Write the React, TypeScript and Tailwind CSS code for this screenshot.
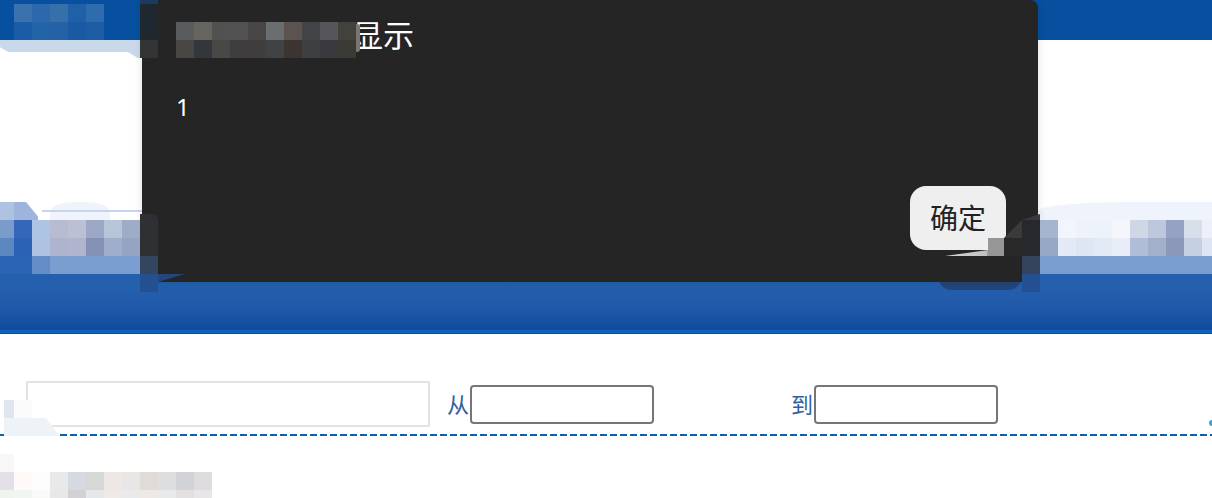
const font = "font-['Noto_Sans','Noto_Sans_CJK_SC',sans-serif]";

// pixelated patches that sit over the page, 18px cells
function Mosaic({ rows, className }: { rows: string[][]; className: string }) {
  return (
    <div className={"absolute flex flex-col " + className}>
      {rows.map((row, i) => (
        <div key={i} className="flex h-[18px]">
          {row.map((c, j) => (
            <div key={j} className="h-full w-[18px] shrink-0" style={{ backgroundColor: c }} />
          ))}
        </div>
      ))}
    </div>
  );
}

function Field({ label, className }: { label: string; className: string }) {
  return (
    <label className={"flex items-center text-[22px] leading-none text-[#2f5f9e] " + className}>
      {label}
      <input className="ml-px h-[39px] w-[184px] rounded border-2 border-[#767676] bg-white" />
    </label>
  );
}

export default function App() {
  return (
    <div className={"relative h-[498px] w-[1212px] overflow-hidden bg-white " + font}>
      {/* header */}
      <div className="h-[40px] bg-[#07509f]" />
      <div className="h-[18px] w-[142px] bg-[#c9d9ea] [clip-path:polygon(0_0,100%_0,100%_100%,97%_100%,90%_67%,6%_67%,0_40%)]" />
      <div className="h-[144px]" />
      <div className="relative h-[80px] overflow-hidden">
        <div className="absolute left-[50px] top-0 h-[40px] w-[60px] rounded-t-[24px_10px] bg-[#eff3fb]" />
        <div className="absolute left-[42px] top-[8px] h-[2px] w-[100px] bg-[#c5d4f0]" />
        <div className="absolute left-[1036px] top-0 h-[40px] w-[300px] rounded-tl-[90px_10px] bg-[#eff3fb]" />
        <div className="absolute left-0 top-0 h-[18px] w-[14px] bg-[#aec3e2]" />
        <div className="absolute left-[14px] top-0 h-[18px] w-[24px] bg-[#9db5dd] [clip-path:polygon(0_0,50%_0,100%_80%,100%_100%,0_100%)]" />
      </div>
      <div className="h-[48px] bg-[linear-gradient(180deg,#2460ae_0%,#2159a9_55%,#0f4a9c_100%)]" />
      <div className="h-[3px] bg-[#0b63bb]" />
      <div className="h-px bg-[#0a4fa0]" />

      {/* filter row */}
      <div className="flex h-[100px] items-center pl-[26px] pt-[40px]">
        <input className="h-[46px] w-[404px] border-2 border-[#e3e3e3] bg-white" />
        <Field label="从" className="ml-[17px]" />
        <Field label="到" className="ml-[137px]" />
      </div>
      <div className="h-[2px] bg-[repeating-linear-gradient(90deg,#0f5fb0_0,#0f5fb0_7px,transparent_7px,transparent_10px)]" />

      {/* dialog */}
      <div className="absolute left-[938px] top-[274px] h-[16px] w-[84px] rounded-b-[14px] bg-[#24467a]" />
      <div className="absolute left-[142px] top-0 flex h-[282px] w-[896px] flex-col rounded-tr-[8px] bg-[#252525] shadow-[0_0_8px_rgba(0,0,0,0.12)]">
        <div className="pl-[210px] pt-[15px] text-[31px] leading-[40px] text-white">显示</div>
        <div className="pl-[34px] pt-[37px] text-[24px] leading-[30px] text-white">1</div>
        <div className="flex flex-1 items-start justify-end pr-[32px] pt-[64px]">
          <button className="h-[64px] w-[96px] rounded-[16px] bg-[#efefef] text-[28px] text-[#222]">确定</button>
        </div>
      </div>

      {/* blurred overlays */}
      <Mosaic
        className="left-[14px] top-[4px]"
        rows={[
          ["#3a72ae", "#2b68ad", "#3570aa", "#1f60a8", "#2f6cad"],
          ["#1a5ca6", "#2363a8", "#2461a6", "#1a5aa2", "#1d5da4"],
        ]}
      />
      <Mosaic
        className="left-[-4px] top-[220px]"
        rows={[
          ["#7a9ccb", "#3467ba", "#aec4e4", "#b8bcd0", "#bcc0d4", "#9ca8c6", "#b8c4d8", "#9eacc8", "#2e3034"],
          ["#5d87bf", "#2c62b5", "#aec2e2", "#aeb4cd", "#b0b4cc", "#8490b6", "#a0aecb", "#96a4c4", "#2e3034"],
          ["#2b63b5", "#2b63b5", "#648dc8", "#7b9ed0", "#7b9ed0", "#7b9ed0", "#7b9ed0", "#7b9ed0", "#34465f"],
          ["#2460ae", "#2460ae", "#2460ae", "#2460ae", "#2460ae", "#2460ae", "#2460ae", "#2460ae", "#245092"],
        ]}
      />
      <div className="absolute left-[140px] top-[214px] h-[6px] w-[18px] rounded-tr-[10px] bg-[#2e3034]" />
      <div className="absolute left-[158px] top-[274px] h-[8px] w-[27px] bg-[#24467a] [clip-path:polygon(0_100%,100%_0,0_0)]" />
      <Mosaic
        className="left-[1022px] top-[220px]"
        rows={[
          ["#26282e", "#a5b5cf", "#f2f5fb", "#eef2fa", "#eef2fa", "#f4f6fc", "#cfd6e5", "#bdc8dc", "#95a2c4", "#d8deea", "#edf0f8", "#edf0f8"],
          ["#26282e", "#96a8c6", "#e3e9f5", "#dfe6f3", "#e3e9f5", "#e8edf7", "#b0bdd6", "#a3b0cb", "#8b98b9", "#c5d0e2", "#dfe6f3", "#dfe6f3"],
          ["#33435c", "#7b9ed0", "#7b9ed0", "#7b9ed0", "#7b9ed0", "#7b9ed0", "#7b9ed0", "#7b9ed0", "#7b9ed0", "#7b9ed0", "#7b9ed0", "#7b9ed0"],
          ["#245092", "#2460ae", "#2460ae", "#2460ae", "#2460ae", "#2460ae", "#2460ae", "#2460ae", "#2460ae", "#2460ae", "#2460ae", "#2460ae"],
        ]}
      />
      <div className="absolute left-[1022px] top-[214px] h-[6px] w-[18px] bg-[#3a3a3a] [clip-path:polygon(0_100%,100%_0,100%_100%)]" />
      <div className="absolute left-[1004px] top-[220px] h-[18px] w-[18px] bg-[#3a3a3a] [clip-path:polygon(0_100%,100%_0,100%_100%)]" />
      <div className="absolute left-[1004px] top-[238px] h-[18px] w-[18px] bg-[#282828]" />
      <div className="absolute left-[945px] top-[238px] h-[18px] w-[59px] bg-[linear-gradient(90deg,#d8d8d8,#c0c0c0_70%,#969696_73%,#969696)] [clip-path:polygon(0_100%,73%_66%,73%_0,100%_0,100%_100%)]" />
      <Mosaic
        className="left-[176px] top-[22px]"
        rows={[
          ["#5a5b5d", "#66645f", "#515150", "#525252", "#474644", "#6a6e6e", "#5c5250", "#434447", "#55555a", "#42413c"],
          ["#484744", "#33363a", "#484846", "#3f3d3e", "#403d3e", "#404245", "#3b3431", "#3e3f41", "#3a393e", "#3b3a35"],
        ]}
      />
      <div className="absolute left-[356px] top-[24px] h-[28px] w-[4px] rounded-r-[3px] bg-[#77776f]" />
      <Mosaic className="left-[140px] top-[4px]" rows={[["#1f2730"], ["#20282f"], ["#333435"]]} />
      <div className="absolute left-[140px] top-0 h-[4px] w-[18px] bg-[#1c3a60]" />

      <Mosaic className="left-[14px] top-[400px]" rows={[["#fbfbfb"]]} />
      <div className="absolute left-[4px] top-[400px] h-[18px] w-[10px] bg-[#e0e6ee]" />
      <div className="absolute left-[4px] top-[418px] h-[18px] w-[56px] bg-[#eef3f8] [clip-path:polygon(0_0,75%_0,100%_100%,0_100%)]" />
      <div className="absolute left-[1209px] top-[420px] size-[6px] rounded-full bg-[#3aa6d8]" />
      <Mosaic
        className="left-[-4px] top-[454px]"
        rows={[
          ["#f8f8f8"],
          ["#e4e0ea", "#fff9f7", "#fdfdfd", "#e8e9ea", "#d6d9e2", "#d6d8d6", "#ede8e6", "#e9e7e6", "#dfdbd6", "#dcdee0", "#d2d3d7", "#dfdcdf"],
          ["#eef5ee", "#f1f6f2", "#f9f9f7", "#e8e8e8", "#d3d0d6", "#e5e8ea", "#efeae8", "#e8eaec", "#efe9e6", "#e7eae8", "#e3e0e2", "#e8e6e6"],
        ]}
      />
    </div>
  );
}
